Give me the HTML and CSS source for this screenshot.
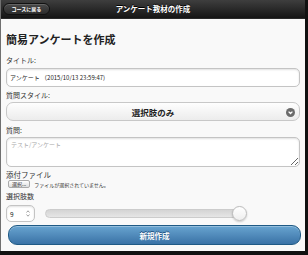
FILE: index.html
```html
<!DOCTYPE html>
<html lang="ja">

<head>
    <meta charset="UTF-8">
    <meta name="viewport" content="width=device-width, initial-scale=1.0">
    <title>アンケート教材の作成</title>
    <link rel="stylesheet" href="styles.css">
</head>

<body>
    <div class="page">
        <div class="header">
            <div class="header-left">
                <a class="back-btn">コースに戻る</a>
            </div>
            <h1 class="header-title">アンケート教材の作成</h1>
            <div></div>
        </div>

        <div class="content">
            <h2 class="page-title">簡易アンケートを作成</h2>

            <label class="field-label">タイトル:</label>
            <div class="text-input">アンケート （2015/10/13 23:59:47)</div>

            <label class="field-label tight">質問スタイル:</label>
            <div class="select-btn">
                <span>選択肢のみ</span>
                <span class="select-icon">
                    <svg width="9" height="9" viewBox="0 0 9 9">
                        <circle cx="4.5" cy="4.5" r="4.5" fill="#6b6b6b" />
                        <path d="M2.6 3.6 L4.5 5.5 L6.4 3.6" stroke="#fff" stroke-width="1.3" fill="none" />
                    </svg>
                </span>
            </div>

            <label class="field-label tight">質問:</label>
            <textarea class="text-area" placeholder="テスト/アンケート"></textarea>

            <label class="field-label file-label">添付ファイル</label>
            <div class="file-row">
                <span class="file-btn">選択...</span>
                <span>ファイルが選択されていません。</span>
            </div>

            <label class="field-label wide">選択肢数</label>
            <div class="slider-row">
                <div class="num-input">
                    <span>9</span>
                    <svg width="4" height="7" viewBox="0 0 4 7">
                        <path d="M0.5 2.5 L2 0.8 L3.5 2.5 M0.5 4.5 L2 6.2 L3.5 4.5" stroke="#888" stroke-width="0.8" fill="none" />
                    </svg>
                </div>
                <div class="slider-track">
                    <div class="slider-thumb"></div>
                </div>
            </div>

            <button class="submit-btn">新規作成</button>
        </div>
    </div>
</body>

</html>
```

FILE: styles.css
```css
* {
    font-family: "Noto Sans CJK JP", "Liberation Sans", sans-serif;
    margin: 0;
    padding: 0;
    box-sizing: border-box;
}

body {
    background-color: #111;
    width: 308px;
    height: 255px;
    overflow: hidden;
}

.page {
    width: 305px;
    height: 251px;
    border-left: 1px solid #707070;
    background-color: #f9f9f9;
}

.header {
    height: 19px;
    display: grid;
    grid-template-columns: 1fr auto 1fr;
    align-items: center;
    background: linear-gradient(#3e3e3e, #151515);
    border-bottom: 1px solid #2a2a2a;
}

.header-left {
    display: flex;
    padding-left: 2px;
}

.back-btn {
    display: block;
    width: 47px;
    height: 12px;
    line-height: 10px;
    text-align: center;
    font-size: 5px;
    font-weight: bold;
    color: #fff;
    border: 1px solid #111;
    border-radius: 6px;
    background: linear-gradient(#4a4a4a, #2c2c2c);
    box-shadow: inset 0 1px 0 rgba(255, 255, 255, 0.15);
}

.header-title {
    font-size: 7.5px;
    line-height: 10px;
    font-weight: bold;
    color: #fff;
    text-shadow: 0 -1px 0 #000;
}

.content {
    padding: 0 5px;
    display: flex;
    flex-direction: column;
}

.page-title {
    margin: 13px 0 10px;
    font-size: 11px;
    line-height: 14px;
    font-weight: bold;
    color: #222;
}

.field-label {
    display: block;
    margin-bottom: 3px;
    font-size: 7px;
    line-height: 9px;
    color: #333;
}

.field-label.tight {
    margin-bottom: 2px;
}

.field-label.wide {
    margin-bottom: 4px;
}

.text-input,
.text-area {
    width: 100%;
    background-color: #fff;
    border: 1px solid #c4c4c4;
    border-radius: 5px;
    box-shadow: inset 0 1px 2px rgba(0, 0, 0, 0.12);
    font-size: 6px;
    color: #222;
}

.text-input {
    height: 19px;
    line-height: 17px;
    padding-left: 3px;
    margin-bottom: 4px;
}

.select-btn {
    height: 19px;
    display: flex;
    align-items: center;
    justify-content: center;
    position: relative;
    border: 1px solid #c8c8c8;
    border-radius: 7px;
    background: linear-gradient(#fefefe, #ececec);
    font-size: 8.5px;
    font-weight: bold;
    color: #222;
    text-shadow: 0 1px 0 #fff;
    margin-bottom: 5px;
}

.select-icon {
    position: absolute;
    right: 4px;
    top: 4px;
    height: 9px;
}

.text-area {
    height: 30px;
    padding: 2px 4px;
    resize: vertical;
    outline: none;
    margin-bottom: 4px;
}

.text-area::placeholder {
    color: #a8a8a8;
}

.file-label {
    margin-bottom: 0;
    line-height: 8px;
    font-size: 7.5px;
}

.file-row {
    display: flex;
    align-items: center;
    gap: 4px;
    height: 10px;
    margin-bottom: 3px;
    font-size: 5px;
    color: #333;
    padding-left: 2px;
}

.file-btn {
    display: inline-block;
    height: 8px;
    line-height: 6px;
    padding: 0 3px;
    border: 1px solid #aaa;
    border-radius: 2px;
    background: linear-gradient(#fff, #ddd);
}

.slider-row {
    display: flex;
    align-items: center;
    gap: 10px;
    height: 17px;
}

.num-input {
    flex-shrink: 0;
    width: 29px;
    height: 17px;
    display: flex;
    align-items: center;
    justify-content: space-between;
    padding: 0 4px 0 3px;
    background-color: #fff;
    border: 1px solid #c4c4c4;
    border-radius: 5px;
    box-shadow: inset 0 1px 2px rgba(0, 0, 0, 0.12);
    font-size: 6.5px;
    color: #222;
}

.slider-track {
    flex-shrink: 0;
    position: relative;
    width: 198px;
    height: 9px;
    border: 1px solid #ccc;
    border-radius: 5px;
    background: linear-gradient(#d4d4d4, #e6e6e6);
}

.slider-thumb {
    position: absolute;
    right: -5px;
    top: -4px;
    width: 15px;
    height: 15px;
    border-radius: 50%;
    border: 1px solid #bbb;
    background: linear-gradient(#fff, #eee);
    box-shadow: 0 1px 2px rgba(0, 0, 0, 0.2);
}

.submit-btn {
    margin: 3px 0 0 2px;
    width: 293px;
    height: 20px;
    border: 1px solid #1f5a85;
    border-radius: 9px;
    background: linear-gradient(#68a4d0, #3a72a6);
    font-size: 7.5px;
    font-weight: bold;
    color: #fff;
    text-shadow: 0 -1px 0 #194b7a;
    box-shadow: inset 0 1px 0 rgba(255, 255, 255, 0.3);
}
```
